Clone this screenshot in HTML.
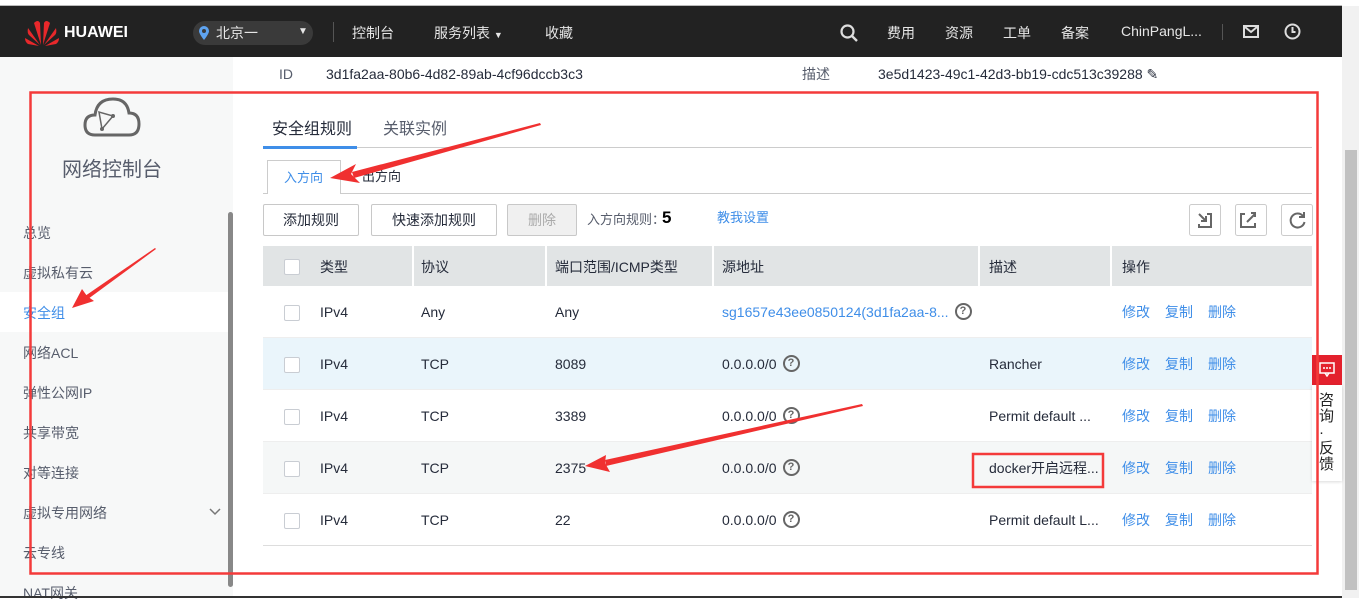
<!DOCTYPE html>
<html><head><meta charset="utf-8"><style>
*{margin:0;padding:0;box-sizing:border-box}
body{width:1359px;height:598px;overflow:hidden;background:#fff;font-family:"Liberation Sans","Noto Sans CJK SC",sans-serif;font-size:14px;color:#252b3a;position:relative}
.abs{position:absolute}
.hdr{left:0;top:6px;width:1342px;height:51px;background:#222;color:#e6e6e6}
.hdr span{position:absolute;top:17px;font-size:14px}
.side{left:0;top:57px;width:233px;height:540px;background:#f7f8f8}
.side .it{position:absolute;left:23px;font-size:14px;color:#575d6c}
.t{position:absolute;font-size:14px;color:#252b3a;line-height:16px}
.btn{position:absolute;top:204px;height:32px;border:1px solid #c8c8c8;background:#fff;font-size:14px;text-align:center;line-height:30px;border-radius:2px}
.row{position:absolute;left:263px;width:1049px;height:52px;border-bottom:1px solid #eee}
.cb{position:absolute;left:21px;width:16px;height:16px;border:1px solid #c9cdd3;background:#fff;border-radius:2px}
.q{display:inline-block;width:17px;height:17px;border:2px solid #666;border-radius:50%;font-size:11px;line-height:13px;text-align:center;font-weight:bold;color:#666;vertical-align:top;margin-top:-1px;margin-left:6px}
.ops span{margin-right:15px;color:#3f8ee8}
</style></head><body>
<div class="abs" style="left:0;top:5px;width:1342px;height:1px;background:#bbb"></div>
<div class="abs hdr">
 <svg class="abs" style="left:24px;top:13px" width="36" height="28" viewBox="0 0 36 28"><g fill="#e8282b"><path d="M17 26 L10 4 Q14 0 16 4Z"/><path d="M19 26 L26 4 Q22 0 20 4Z"/><path d="M16 26 L4 9 Q3 14 5 16Z"/><path d="M20 26 L32 9 Q33 14 31 16Z"/><path d="M15 27 L1 19 Q1 23 4 25Z"/><path d="M21 27 L35 19 Q35 23 32 25Z"/></g></svg>
 <span style="left:64px;font-weight:bold;font-size:16px;top:18px;color:#fff">HUAWEI</span>
 <div class="abs" style="left:193px;top:15px;width:120px;height:24px;background:#3a3a3a;border-radius:12px"></div>
 <svg class="abs" style="left:199px;top:20px" width="10" height="14"><path d="M5 0a5 5 0 0 1 5 5c0 3-5 9-5 9S0 8 0 5a5 5 0 0 1 5-5z" fill="#5ea3f0"/><circle cx="5" cy="5" r="2" fill="#3a3a3a"/></svg>
 <span style="left:216px">北京一</span><span style="left:298px;font-size:10px;top:20px">▼</span>
 <div class="abs" style="left:333px;top:16px;width:1px;height:20px;background:#555"></div>
 <span style="left:352px">控制台</span><span style="left:434px">服务列表 <small style="font-size:9px">▼</small></span><span style="left:545px">收藏</span>
 <svg class="abs" style="left:840px;top:18px" width="18" height="18"><circle cx="7.5" cy="7.5" r="6" stroke="#ddd" stroke-width="2.2" fill="none"/><path d="M12 12l5 5" stroke="#ddd" stroke-width="2.4"/></svg>
 <span style="left:887px">费用</span><span style="left:945px">资源</span><span style="left:1003px">工单</span><span style="left:1061px">备案</span><span style="left:1121px">ChinPangL...</span>
 <div class="abs" style="left:1222px;top:18px;width:1px;height:16px;background:#555"></div>
 <svg class="abs" style="left:1243px;top:19px" width="16" height="13"><rect x="1" y="1" width="14" height="11" fill="none" stroke="#ddd" stroke-width="2"/><path d="M2 2l6 5 6-5" stroke="#ddd" stroke-width="2" fill="none"/></svg>
 <svg class="abs" style="left:1284px;top:17px" width="17" height="17"><circle cx="8.5" cy="8.5" r="7" stroke="#ddd" stroke-width="2" fill="none"/><path d="M8.5 4v5h3" stroke="#ddd" stroke-width="2" fill="none"/></svg>
</div>
<div class="abs" style="left:1342px;top:6px;width:17px;height:592px;background:#f1f1f1"></div>
<div class="abs" style="left:1345px;top:150px;width:12px;height:440px;background:#c1c1c1"></div>
<div class="abs side">
 <svg class="abs" style="left:83px;top:38px" width="58" height="42" viewBox="0 0 58 42"><path d="M12 40 Q2 40 2 30 Q2 20 12 20 Q14 4 30 4 Q44 4 46 18 Q56 18 56 29 Q56 40 46 40Z" fill="none" stroke="#666" stroke-width="3"/><path d="M19 34 L16 17 L30 21Z" fill="none" stroke="#666" stroke-width="1.5"/><circle cx="19" cy="34" r="2" fill="#666"/><circle cx="30" cy="21" r="2" fill="#666"/></svg>
 <div class="abs" style="left:62px;top:96px;font-size:20px;color:#575d6c">网络控制台</div>
 <div class="abs" style="left:0;top:235px;width:233px;height:40px;background:#fff"></div>
 <div class="it" style="top:166px">总览</div><div class="it" style="top:206px">虚拟私有云</div><div class="it" style="top:246px;color:#3f8ee8">安全组</div><div class="it" style="top:286px">网络ACL</div><div class="it" style="top:326px">弹性公网IP</div><div class="it" style="top:366px">共享带宽</div><div class="it" style="top:406px">对等连接</div><div class="it" style="top:446px">虚拟专用网络</div><div class="it" style="top:486px">云专线</div><div class="it" style="top:526px">NAT网关</div>
 <svg class="abs" style="left:209px;top:451px" width="12" height="8"><path d="M1 1l5 5 5-5" stroke="#777" stroke-width="1.5" fill="none"/></svg>
 <div class="abs" style="left:228px;top:155px;width:5px;height:375px;background:#888;border-radius:3px"></div>
</div>
<div class="abs" style="left:0;top:596px;width:1342px;height:2px;background:#333"></div>
<div class="t" style="left:279px;top:66px;color:#575d6c">ID</div>
<div class="t" style="left:326px;top:66px">3d1fa2aa-80b6-4d82-89ab-4cf96dccb3c3</div>
<div class="t" style="left:802px;top:66px;color:#575d6c">描述</div>
<div class="t" style="left:878px;top:66px">3e5d1423-49c1-42d3-bb19-cdc513c39288 ✎</div>
<div class="t" style="left:272px;top:122px;font-size:16px">安全组规则</div>
<div class="t" style="left:383px;top:122px;font-size:16px;color:#575d6c">关联实例</div>
<div class="abs" style="left:263px;top:147px;width:1049px;height:1px;background:#ccc"></div>
<div class="abs" style="left:263px;top:146px;width:94px;height:3px;background:#3f8ee8"></div>
<div class="abs" style="left:263px;top:193px;width:1049px;height:1px;background:#ccc"></div>
<div class="abs" style="left:267px;top:160px;width:74px;height:34px;border:1px solid #ccc;border-bottom:none;background:#fff"></div>
<div class="t" style="left:284px;top:170px;color:#3f8ee8;font-size:13px">入方向</div>
<div class="t" style="left:362px;top:169px;font-size:13px">出方向</div>
<div class="btn" style="left:263px;width:96px">添加规则</div>
<div class="btn" style="left:371px;width:126px">快速添加规则</div>
<div class="btn" style="left:507px;width:70px;background:#f0f0f0;color:#aaa">删除</div>
<div class="t" style="left:587px;top:212px;font-size:13px;color:#575d6c">入方向规则：</div>
<div class="t" style="left:662px;top:210px;font-size:17px;font-weight:bold;color:#000">5</div>
<div class="t" style="left:717px;top:210px;font-size:13px;color:#3f8ee8">教我设置</div>
<svg class="abs" style="left:1189px;top:204px" width="124" height="32"><g fill="#fff" stroke="#ccc"><rect x="0.5" y="0.5" width="31" height="31" rx="2"/><rect x="46.5" y="0.5" width="31" height="31" rx="2"/><rect x="92.5" y="0.5" width="31" height="31" rx="2"/></g><g stroke="#666" stroke-width="2" fill="none"><path d="M10 10l7 7M12 17h5v-5M10 20v3h12V10h-4"/><path d="M56 10h-4v13h14v-4M58 18l8-8M62 9h4v4"/><path d="M114 12a7 7 0 1 0 1.5 6"/><path d="M115 8v5h-5" /></g></svg>
<div class="abs" style="left:263px;top:246px;width:1049px;height:40px;background:#e1e4e5"></div>
<div class="abs" style="left:412px;top:246px;width:2px;height:40px;background:#fff"></div>
<div class="abs" style="left:545px;top:246px;width:2px;height:40px;background:#fff"></div>
<div class="abs" style="left:712px;top:246px;width:2px;height:40px;background:#fff"></div>
<div class="abs" style="left:978px;top:246px;width:2px;height:40px;background:#fff"></div>
<div class="abs" style="left:1110px;top:246px;width:2px;height:40px;background:#fff"></div>
<div class="cb" style="left:284px;top:259px"></div>
<div class="t" style="left:320px;top:259px">类型</div><div class="t" style="left:421px;top:259px">协议</div><div class="t" style="left:555px;top:259px">端口范围/ICMP类型</div><div class="t" style="left:722px;top:259px">源地址</div><div class="t" style="left:989px;top:259px">描述</div><div class="t" style="left:1122px;top:259px">操作</div>

<div class="row" style="top:286px"></div>
<div class="row" style="top:338px;background:#eaf5fb"></div>
<div class="row" style="top:390px"></div>
<div class="row" style="top:442px;background:#f5f7f7"></div>
<div class="row" style="top:494px;border-bottom:1px solid #ddd"></div>

<div class="cb" style="left:284px;top:305px"></div><div class="t" style="left:320px;top:304px">IPv4</div><div class="t" style="left:421px;top:304px">Any</div><div class="t" style="left:555px;top:304px">Any</div><div class="t" style="left:722px;top:304px;color:#3f8ee8">sg1657e43ee0850124(3d1fa2aa-8...<span class="q">?</span></div><div class="t ops" style="left:1122px;top:304px"><span>修改</span><span>复制</span><span>删除</span></div>
<div class="cb" style="left:284px;top:357px"></div><div class="t" style="left:320px;top:356px">IPv4</div><div class="t" style="left:421px;top:356px">TCP</div><div class="t" style="left:555px;top:356px">8089</div><div class="t" style="left:722px;top:356px">0.0.0.0/0<span class="q">?</span></div><div class="t" style="left:989px;top:356px">Rancher</div><div class="t ops" style="left:1122px;top:356px"><span>修改</span><span>复制</span><span>删除</span></div>
<div class="cb" style="left:284px;top:409px"></div><div class="t" style="left:320px;top:408px">IPv4</div><div class="t" style="left:421px;top:408px">TCP</div><div class="t" style="left:555px;top:408px">3389</div><div class="t" style="left:722px;top:408px">0.0.0.0/0<span class="q">?</span></div><div class="t" style="left:989px;top:408px">Permit default ...</div><div class="t ops" style="left:1122px;top:408px"><span>修改</span><span>复制</span><span>删除</span></div>
<div class="cb" style="left:284px;top:461px"></div><div class="t" style="left:320px;top:460px">IPv4</div><div class="t" style="left:421px;top:460px">TCP</div><div class="t" style="left:555px;top:460px">2375</div><div class="t" style="left:722px;top:460px">0.0.0.0/0<span class="q">?</span></div><div class="t" style="left:989px;top:460px">docker开启远程...</div><div class="t ops" style="left:1122px;top:460px"><span>修改</span><span>复制</span><span>删除</span></div>
<div class="cb" style="left:284px;top:513px"></div><div class="t" style="left:320px;top:512px">IPv4</div><div class="t" style="left:421px;top:512px">TCP</div><div class="t" style="left:555px;top:512px">22</div><div class="t" style="left:722px;top:512px">0.0.0.0/0<span class="q">?</span></div><div class="t" style="left:989px;top:512px">Permit default L...</div><div class="t ops" style="left:1122px;top:512px"><span>修改</span><span>复制</span><span>删除</span></div>

<div class="abs" style="left:1312px;top:355px;width:30px;height:30px;background:#e3212d"></div>
<svg class="abs" style="left:1319px;top:362px" width="16" height="15"><rect x="1" y="1" width="14" height="10" fill="none" stroke="#fff" stroke-width="1.5"/><path d="M6 11l2 3 2-3" fill="none" stroke="#fff" stroke-width="1.5"/><circle cx="5" cy="6" r="1" fill="#fff"/><circle cx="8" cy="6" r="1" fill="#fff"/><circle cx="11" cy="6" r="1" fill="#fff"/></svg>
<div class="abs" style="left:1312px;top:385px;width:30px;height:96px;background:#fff;box-shadow:0 1px 3px rgba(0,0,0,.15)"></div>
<div class="abs" style="left:1319px;top:393px;width:16px;font-size:15px;line-height:16px;color:#222">咨询·反馈</div>

<svg class="abs" style="left:0;top:0" width="1359" height="598">
 <rect x="30.5" y="92.5" width="1287" height="481" fill="none" stroke="#f43a3a" stroke-width="2.5"/>
 <rect x="973" y="454" width="130" height="33" fill="none" stroke="#f43a3a" stroke-width="2.5"/>
 <g fill="#f03030">
  <polygon points="540,123 352,172 354,178 541,125"/><polygon points="330,178 356,164 351,174 360,183"/>
  <polygon points="155,248 85,296 88,299 156,249"/><polygon points="72,308 82,289 87,296 94,301"/>
  <polygon points="862,404 605,460 606,466 863,406"/><polygon points="585,466 606,455 605,463 610,472"/>
 </g>
</svg>
</body></html>
